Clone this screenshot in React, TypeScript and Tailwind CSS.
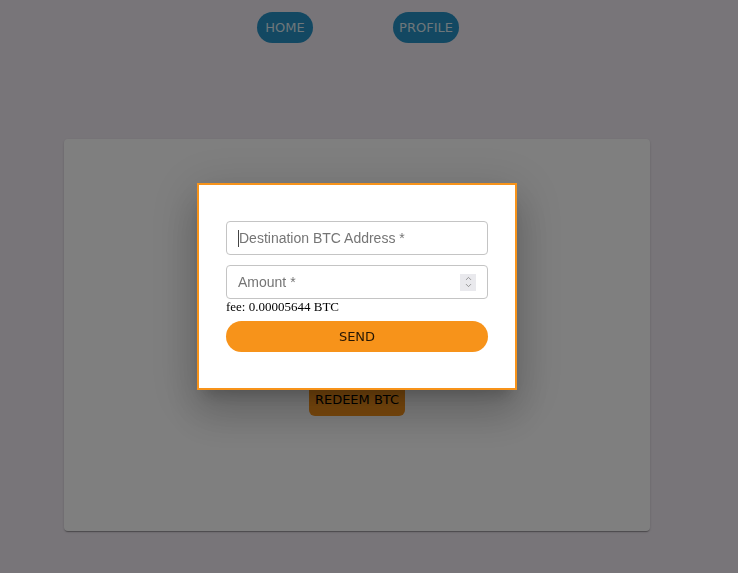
import { ChevronUp, ChevronDown } from "lucide-react";

const sans = "font-['DejaVu_Sans',sans-serif]";

function NavButton({ label, width }: { label: string; width: string }) {
  return (
    <button
      className={`${sans} ${width} h-[31px] rounded-full bg-[#2690c4] text-[13px] uppercase text-[#dcecf4]`}
    >
      {label}
    </button>
  );
}

export default function App() {
  return (
    <div className="relative min-h-screen bg-[#f1ebf3]">
      <nav className="flex gap-[80px] pl-[257px] pt-[12px]">
        <NavButton label="Home" width="w-[56px]" />
        <NavButton label="Profile" width="w-[66px]" />
      </nav>

      <div className="ml-[64px] mt-[96px] flex h-[392px] w-[586px] justify-center rounded-[4px] bg-white pt-[245px] shadow-[0_2px_1px_-1px_rgba(0,0,0,0.2),0_1px_1px_0_rgba(0,0,0,0.14),0_1px_3px_0_rgba(0,0,0,0.12)]">
        <button
          className={`${sans} h-[32px] w-[96px] rounded-[6px] bg-[#f7931a] text-[13px] text-black`}
        >
          REDEEM BTC
        </button>
      </div>

      {/* modal backdrop */}
      <div className="fixed inset-0 flex items-center justify-center bg-black/50 pr-[24px]">
        <div className="flex h-[207px] w-[320px] flex-col border-2 border-[#f7931a] bg-white px-[27px] pt-[36px] shadow-[0_11px_15px_-7px_rgba(0,0,0,0.2),0_24px_38px_3px_rgba(0,0,0,0.14),0_9px_46px_8px_rgba(0,0,0,0.12)]">
          <div className="flex h-[34px] w-full items-center rounded-[4px] border border-[#c4c4c4] pl-[11px]">
            <span className="h-[17px] w-px bg-[#444]" />
            <input
              placeholder="Destination BTC Address *"
              className="min-w-0 flex-1 font-['Liberation_Sans',sans-serif] text-[14px] text-[#222] outline-none placeholder:text-[#757575]"
            />
          </div>
          <div className="mt-[10px] flex h-[34px] w-full items-center rounded-[4px] border border-[#c4c4c4] pl-[11px] pr-[11px]">
            <input
              placeholder="Amount *"
              className="min-w-0 flex-1 font-['Liberation_Sans',sans-serif] text-[14px] text-[#222] outline-none placeholder:text-[#757575]"
            />
            <span className="flex h-[17px] w-[16px] flex-col items-center justify-center bg-[#e9e9ed] text-[#7a7a7a]">
              <ChevronUp size={9} strokeWidth={2} className="-mb-[1px]" />
              <ChevronDown size={9} strokeWidth={2} className="-mt-[1px]" />
            </span>
          </div>
          <p className="h-[22px] pt-[1px] font-['Liberation_Serif',serif] text-[13px] leading-[14px] text-black">
            fee: 0.00005644 BTC
          </p>
          <button
            className={`${sans} h-[31px] w-full rounded-full bg-[#f7931a] text-[13px] text-black/85`}
          >
            SEND
          </button>
        </div>
      </div>
    </div>
  );
}
